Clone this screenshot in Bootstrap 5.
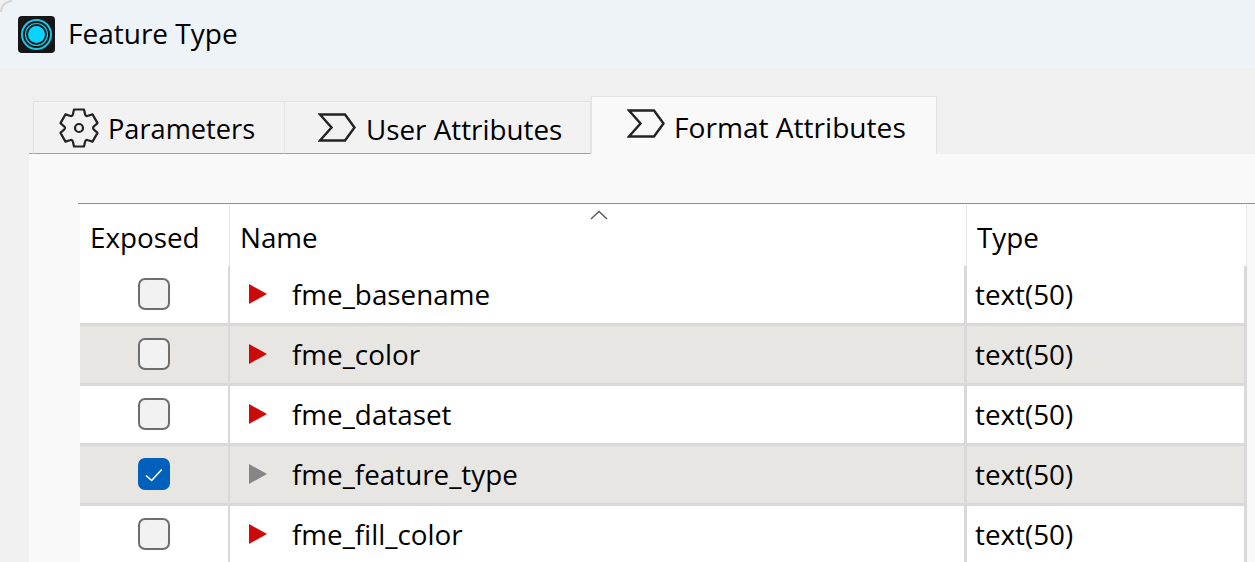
<!DOCTYPE html>
<html>
<head>
    <meta charset='utf-8'>
    <title>Feature Type</title>
    <meta name='viewport' content='width=device-width, initial-scale=1'>
    <link href="https://cdn.jsdelivr.net/npm/bootstrap@5.3.6/dist/css/bootstrap.min.css" rel="stylesheet">
    <style>
        html, body { height: 100%; }
        body { background: #f0f0f0; color: #000; overflow: hidden; font-family: "Open Sans", "Noto Sans", sans-serif; font-size: 27.8px; }
        .title-strip { height: 68px; background: #eef3f8; padding-left: 18px; gap: 13px; font-size: 28px; border-top-left-radius: 12px; position: relative; }
        .title-strip span { margin-top: -2px; }
        .title-strip::before { content: ""; position: absolute; left: 0; top: 0; width: 12px; height: 12px; border-top: 2px solid #d6d6d6; border-left: 2px solid #d6d6d6; border-top-left-radius: 12px; }
        .app-logo { width: 37px; height: 37px; display: block; }
        .tab-strip { height: 86px; padding: 28px 0 0 29px; align-items: flex-end; }
        .tab-strip .nav-tabs { border: 0; padding-left: 4px; align-items: flex-end; box-shadow: inset 0 -1px 0 #a0a0a0; }
        .tab-strip .nav-link { height: 53px; margin: 0; padding: 0 0 0 25px; gap: 9px; color: #000; background: #f2f2f2; border: 1px solid #e3e3e3; border-bottom: 1px solid #a0a0a0; border-radius: 0; border-left-width: 0; }
        .tab-strip .nav-item:first-child .nav-link { border-left-width: 1px; }
        .tab-strip .nav-link.active { height: 60px; margin-bottom: -2px; padding: 0 0 6px 35px; background: #f9f9f9; border-color: #e3e3e3; border-bottom: 0; border-left-width: 1px; }
        .tab-label { padding-top: 4px; }
        .tab-one { width: 252px; }
        .tab-one .tab-label { font-size: 27.2px; }
        .tab-two { width: 306px; padding-left: 33px !important; gap: 10px !important; }
        .tab-three { width: 346px; }
        .tab-three .tab-label { padding-top: 8px; font-size: 28.1px; }
        .tab-gear { overflow: visible; }
        .panel-area { flex: 1; margin-left: 29px; padding: 49px 0 0 49px; background: #f9f9f9; min-height: 0; }
        .grid-wrap { border-top: 1px solid #8f8f96; padding: 1px 0 0 2px; }
        .attr-table { width: 1167px; margin: 0; table-layout: fixed; border-collapse: separate; border-spacing: 0; }
        .attr-table > :not(caption) > * > * { padding: 0; color: #000; box-shadow: none; border: 0; vertical-align: middle; }
        .col-exposed { width: 150px; }
        .col-name { width: 737px; }
        .col-type { width: 280px; }
        .attr-table thead th { height: 61px; font-weight: 400; padding: 4px 0 0 10px; background: #fff; border-right: 1px solid #e8e8e8; position: relative; }
        .sort-mark { position: absolute; left: 360px; top: 5px; width: 18px; height: 10px; }
        .attr-table tbody td { height: 60px; background: #fff; border-right: 3px solid #d9d9d9; border-bottom: 3px solid #d9d9d9; }
        .attr-table tbody td:first-child { border-right-width: 2px; }
        .attr-table tbody tr:nth-child(even) td { background: #e8e6e3; }
        .attr-table tbody td.cell-type { padding-left: 8px; }
        .attr-check.form-check-input { display: block; width: 32px; height: 32px; margin: -1px auto 0; background-color: #f2f2f2; border: 2px solid #6e6e6e; border-radius: 7px; float: none; }
        .attr-check.form-check-input:checked { background-color: #0060bb; border-color: #0060bb; background-size: 100%; background-image: url("data:image/svg+xml,%3csvg xmlns='http://www.w3.org/2000/svg' viewBox='2 2 28 28'%3e%3cpath fill='none' stroke='%23fff' stroke-width='1.6' d='M8 17.5l5.7 5L23.7 11.5'/%3e%3c/svg%3e"); }
        .attr-name { gap: 25px; padding-left: 19px; }
        .attr-mark { width: 18px; height: 20px; display: block; margin-top: -2px; }
    </style>
</head>
<body class="d-flex flex-column">
    <div class="title-strip d-flex align-items-center">
        <svg class="app-logo" viewBox="0 0 37 37">
            <rect width="37" height="37" rx="4" fill="#161616"/>
            <circle cx="18.5" cy="18.5" r="14.5" fill="none" stroke="#18c6ea" stroke-width="2"/>
            <circle cx="18.5" cy="18.5" r="11" fill="none" stroke="#18c6ea" stroke-width="1.2"/>
            <circle cx="18.5" cy="18.5" r="8.5" fill="#08d4ff"/>
        </svg>
        <span>Feature Type</span>
    </div>

    <div class="tab-strip d-flex">
        <ul class="nav nav-tabs">
            <li class="nav-item">
                <a class="nav-link tab-one d-flex align-items-center" href="#">
                    <svg class="tab-gear" width="40" height="40" viewBox="-20 -20 40 40">
                        <path d="M-6 -14 L-5 -18.5 H5 L6 -14 Q6.5 -11.26 9.12 -12.2 L13.52 -13.58 L18.52 -4.92 L15.12 -1.8 Q13 0 15.12 1.8 L18.52 4.92 L13.52 13.58 L9.12 12.2 Q6.5 11.26 6 14 L5 18.5 H-5 L-6 14 Q-6.5 11.26 -9.12 12.2 L-13.52 13.58 L-18.52 4.92 L-15.12 1.8 Q-13 0 -15.12 -1.8 L-18.52 -4.92 L-13.52 -13.58 L-9.12 -12.2 Q-6.5 -11.26 -6 -14 Z" fill="none" stroke="#222" stroke-width="2.2" stroke-linejoin="round"/>
                        <circle r="4" fill="none" stroke="#222" stroke-width="2.2"/>
                    </svg>
                    <span class="tab-label">Parameters</span>
                </a>
            </li>
            <li class="nav-item">
                <a class="nav-link tab-two d-flex align-items-center" href="#">
                    <svg width="38" height="29" viewBox="0 0 38 29">
                        <path d="M2 1.5 H27 L36.5 14.5 L27 27.5 H2 L13.5 14.5 Z" fill="none" stroke="#222" stroke-width="2.4"/>
                    </svg>
                    <span class="tab-label">User Attributes</span>
                </a>
            </li>
            <li class="nav-item">
                <a class="nav-link active tab-three d-flex align-items-center" href="#">
                    <svg width="38" height="29" viewBox="0 0 38 29">
                        <path d="M2 1.5 H27 L36.5 14.5 L27 27.5 H2 L13.5 14.5 Z" fill="none" stroke="#222" stroke-width="2.4"/>
                    </svg>
                    <span class="tab-label">Format Attributes</span>
                </a>
            </li>
        </ul>
    </div>

    <div class="panel-area">
        <div class="grid-wrap">
            <table class="table attr-table">
                <colgroup>
                    <col class="col-exposed">
                    <col class="col-name">
                    <col class="col-type">
                </colgroup>
                <thead>
                    <tr>
                        <th>Exposed</th>
                        <th>
                            Name
                            <svg class="sort-mark" viewBox="0 0 18 10"><path d="M1 9 L9 1.5 L17 9" fill="none" stroke="#555" stroke-width="1.3"/></svg>
                        </th>
                        <th>Type</th>
                    </tr>
                </thead>
                <tbody>
                    <tr>
                        <td><input class="form-check-input attr-check" type="checkbox"></td>
                        <td><div class="attr-name d-flex align-items-center"><svg class="attr-mark" viewBox="0 0 18 20"><path d="M0 0 L18 10 L0 20 Z" fill="#cc0a0a"/></svg>fme_basename</div></td>
                        <td class="cell-type">text(50)</td>
                    </tr>
                    <tr>
                        <td><input class="form-check-input attr-check" type="checkbox"></td>
                        <td><div class="attr-name d-flex align-items-center"><svg class="attr-mark" viewBox="0 0 18 20"><path d="M0 0 L18 10 L0 20 Z" fill="#cc0a0a"/></svg>fme_color</div></td>
                        <td class="cell-type">text(50)</td>
                    </tr>
                    <tr>
                        <td><input class="form-check-input attr-check" type="checkbox"></td>
                        <td><div class="attr-name d-flex align-items-center"><svg class="attr-mark" viewBox="0 0 18 20"><path d="M0 0 L18 10 L0 20 Z" fill="#cc0a0a"/></svg>fme_dataset</div></td>
                        <td class="cell-type">text(50)</td>
                    </tr>
                    <tr>
                        <td><input class="form-check-input attr-check" type="checkbox" checked></td>
                        <td><div class="attr-name d-flex align-items-center"><svg class="attr-mark" viewBox="0 0 18 20"><path d="M0 0 L18 10 L0 20 Z" fill="#868686"/></svg>fme_feature_type</div></td>
                        <td class="cell-type">text(50)</td>
                    </tr>
                    <tr>
                        <td><input class="form-check-input attr-check" type="checkbox"></td>
                        <td><div class="attr-name d-flex align-items-center"><svg class="attr-mark" viewBox="0 0 18 20"><path d="M0 0 L18 10 L0 20 Z" fill="#cc0a0a"/></svg>fme_fill_color</div></td>
                        <td class="cell-type">text(50)</td>
                    </tr>
                </tbody>
            </table>
        </div>
    </div>
    <script src="https://cdn.jsdelivr.net/npm/bootstrap@5.3.6/dist/js/bootstrap.bundle.min.js"></script>
</body>
</html>
